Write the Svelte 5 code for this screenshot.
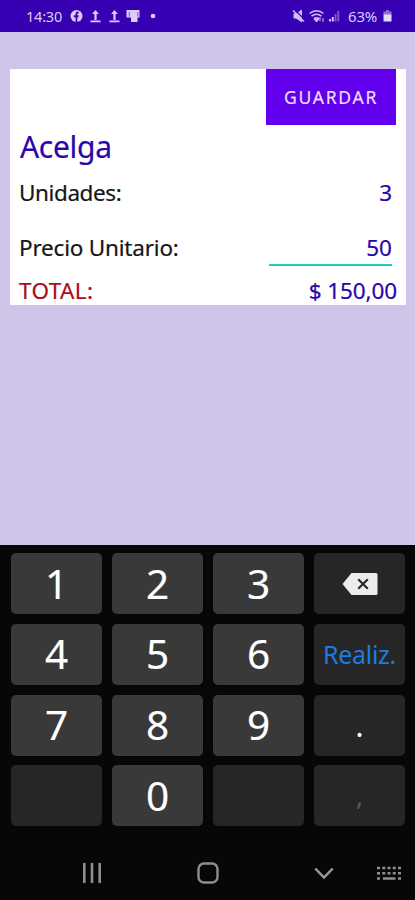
<script>
  let name = 'Acelga'
  let units = 3
  let price = 50
  let total = (units * price).toFixed(2).replace('.', ',')

  let keys = [
    { label: '1' }, { label: '2' }, { label: '3' }, { type: 'delete' },
    { label: '4' }, { label: '5' }, { label: '6' }, { label: 'Realiz.', type: 'done' },
    { label: '7' }, { label: '8' }, { label: '9' }, { label: '.', type: 'dark' },
    { type: 'dark' }, { label: '0' }, { type: 'dark' }, { label: ',', type: 'comma' }
  ]
</script>

<div class="screen">
  <header class="status-bar">
    <span class="clock">14:30</span>
    <svg class="notifications" viewBox="0 0 90 16" fill="#d9cdf5">
      <circle cx="6.5" cy="8" r="6" />
      <path d="M5.6 14V9.3H3.8V7.2h1.8V6c0-1.8 1-2.6 2.9-2.4v1.8c-.9 0-1.2.2-1.2.9v.9h1.4l-.3 2.1H7.3V14z" fill="#3700b3" />
      <path d="M25.5 2l3.4 4h-2.3V12h-2.200V6h-2.300zM20.500 12.400h10v1.800h-10z" />
      <path d="M44.500 2l3.400 4h-2.300V12h-2.200V6h-2.300zM39.500 12.400h10v1.800h-10z" />
      <path d="M56.500 2h13v7.500h-2v4.500h-6.500V9.500h-4.500z" />
      <path d="M59.300 4v4.500M67.800 4v4.500" stroke="#7a55cf" />
      <circle cx="83" cy="8" r="2.300" />
    </svg>
    <svg class="indicators" viewBox="0 0 50 16" fill="#cfc2f0">
      <path d="M1.500 5.500H4l6-4v13l-6-4H1.500z" />
      <path d="M2.500 1.500L13 12" stroke="#3700b3" stroke-width="1.200" />
      <path d="M1 2.500L12 13.500" stroke="#cfc2f0" stroke-width="1.600" />
      <path d="M17.500 5.500q7-5.500 14 0M19.500 8.200q5-3.800 10 0M21.800 10.600q2.700-1.800 5.400 0" fill="none" stroke="#cfc2f0" stroke-width="1.500" />
      <path d="M24.500 14l-2.500-3h5zM28 9v4M31 14v-4" stroke="#cfc2f0" />
      <path d="M37 11h2v2.500h-2zM39.800 9h2v4.500h-2z" />
      <path d="M42.600 6h1.900v7.500h-1.900zM45.300 3h1.900v10.500h-1.900z" opacity="0.450" />
    </svg>
    <span class="percent">63%</span>
    <svg class="battery" viewBox="0 0 9 14">
      <path d="M3 1h3v1.500h2.500V6h-8V2.500H3z" fill="#8f70d5" />
      <path d="M.500 5.500h8v7h-8z" fill="#e5dcfa" />
    </svg>
  </header>

  <main>
    <section class="card">
      <button class="save">GUARDAR</button>
      <h1>{name}</h1>
      <div class="row units">
        <span class="label">Unidades:</span>
        <span class="value">{units}</span>
      </div>
      <div class="row price">
        <span class="label">Precio Unitario:</span>
        <span class="value field">{price}</span>
      </div>
      <div class="row total">
        <span class="label">TOTAL:</span>
        <span class="value">$ {total}</span>
      </div>
    </section>
  </main>

  <div class="keyboard">
    {#each keys as key}
      <button class="key {key.type || ''}" aria-label={key.label || key.type}>
        {#if key.type === 'delete'}
          <svg viewBox="0 0 36 22">
            <path d="M9.500 0H34q1.500 0 1.500 1.500v19q0 1.500-1.500 1.500H9.500L.500 11z" fill="#ececec" />
            <path d="M16.200 6.200l9.600 9.600M25.800 6.200l-9.600 9.600" stroke="#262626" stroke-width="2.100" />
          </svg>
        {:else if key.label}
          {key.label}
        {/if}
      </button>
    {/each}
  </div>

  <nav>
    <svg class="recents" viewBox="0 0 20 20" stroke="#8e8e8e" stroke-width="2.600">
      <path d="M2.300 0v20M10 0v20M17.700 0v20" />
    </svg>
    <svg class="home" viewBox="0 0 22 22">
      <rect x="1.500" y="1.500" width="19" height="19" rx="5.500" fill="none" stroke="#8e8e8e" stroke-width="2.400" />
    </svg>
    <svg class="hide" viewBox="0 0 20 13">
      <path d="M1.300 1.500l8.700 9 8.700-9" fill="none" stroke="#9a9a9a" stroke-width="2.500" />
    </svg>
    <svg class="switch" viewBox="0 0 24 15" stroke="#8e8e8e" stroke-width="2.600">
      <path d="M0 2h24M0 7.300h24" stroke-dasharray="3 2.250" />
      <path d="M0 12.500h3M6 12.500h12.500M21 12.500h3" />
    </svg>
  </nav>
</div>

<style>
  :global(body) {
    margin: 0;
    background: #070707;
  }

  .screen {
    width: 415px;
    height: 900px;
    display: flex;
    flex-direction: column;
    background: #070707;
    font-family: "Noto Sans", sans-serif;
    overflow: hidden;
  }

  svg {
    display: block;
    flex: none;
  }

  button {
    border: 0;
    margin: 0;
    padding: 0;
    font-family: inherit;
  }

  .status-bar {
    height: 32px;
    box-sizing: border-box;
    padding-left: 26px;
    display: flex;
    align-items: center;
    background: #3700b3;
    color: #d9cdf5;
    font-size: 14.5px;
    letter-spacing: -0.2px;
  }

  .clock {
    width: 44px;
  }

  .notifications {
    width: 90px;
    height: 16px;
  }

  .indicators {
    width: 50px;
    height: 16px;
    margin-left: 132px;
  }

  .percent {
    width: 35px;
    margin-left: 6px;
    font-size: 15px;
  }

  .battery {
    width: 9px;
    height: 14px;
  }

  main {
    height: 513px;
    box-sizing: border-box;
    padding: 37px 9px 0 10px;
    background: #cfc5e8;
  }

  .card {
    height: 236px;
    display: flex;
    flex-direction: column;
    background: #fff;
    color: #2b06a8;
    font-size: 22.5px;
    -webkit-text-stroke: 0.2px currentColor;
  }

  .save {
    width: 130px;
    height: 56px;
    margin-right: 10px;
    align-self: flex-end;
    background: #6200ee;
    color: #eadffc;
    font-size: 17.5px;
    letter-spacing: 1.75px;
  }

  h1 {
    margin: 0;
    padding: 1px 0 0 10px;
    font-size: 30px;
    font-weight: 400;
    line-height: 41px;
    letter-spacing: -0.3px;
  }

  .row {
    display: flex;
    justify-content: space-between;
    padding: 0 14px 0 9px;
  }

  .label {
    color: #161616;
    letter-spacing: -0.2px;
  }

  .units {
    height: 52px;
    line-height: 52px;
  }

  .units .label {
    letter-spacing: -0.4px;
  }

  .price {
    height: 57px;
    line-height: 58px;
  }

  .field {
    width: 123px;
    height: 47px;
    box-sizing: border-box;
    padding-top: 12px;
    border-bottom: 2px solid #20cdbd;
    line-height: 34px;
    text-align: right;
  }

  .total {
    height: 29px;
    padding-right: 9px;
    line-height: 29px;
  }

  .total .label {
    color: #ad0c16;
    letter-spacing: 0.4px;
  }

  .total .value {
    letter-spacing: -0.1px;
  }

  .keyboard {
    height: 282px;
    box-sizing: border-box;
    padding: 8px 10px 0 11px;
    display: grid;
    grid-template-columns: repeat(4, 91px);
    grid-template-rows: repeat(4, 61px);
    gap: 9.8px 10px;
  }

  .key {
    display: flex;
    align-items: center;
    justify-content: center;
    padding-bottom: 1px;
    border-radius: 5px;
    background: #393939;
    color: #fff;
    font-size: 40.5px;
    -webkit-text-stroke: 0.15px currentColor;
  }

  .delete,
  .done,
  .dark,
  .comma {
    background: #262626;
    -webkit-text-stroke: 0;
  }

  .delete {
    padding-bottom: 0;
  }

  .delete svg {
    width: 36px;
    height: 22px;
  }

  .done {
    padding-bottom: 0;
    color: #1d7ce0;
    font-size: 25px;
    letter-spacing: -0.3px;
  }

  .dark {
    padding-bottom: 0;
    font-size: 30px;
  }

  .comma {
    padding-bottom: 0;
    color: #5c5c5c;
    font-size: 26px;
  }

  nav {
    height: 73px;
    box-sizing: border-box;
    padding: 19px 14px 0 82px;
    display: flex;
    align-items: center;
  }

  .recents {
    width: 20px;
    height: 20px;
  }

  .home {
    width: 22px;
    height: 22px;
    margin-left: 95px;
  }

  .hide {
    width: 20px;
    height: 13px;
    margin-left: 95px;
  }

  .switch {
    width: 24px;
    height: 15px;
    margin-left: 43px;
  }
</style>
